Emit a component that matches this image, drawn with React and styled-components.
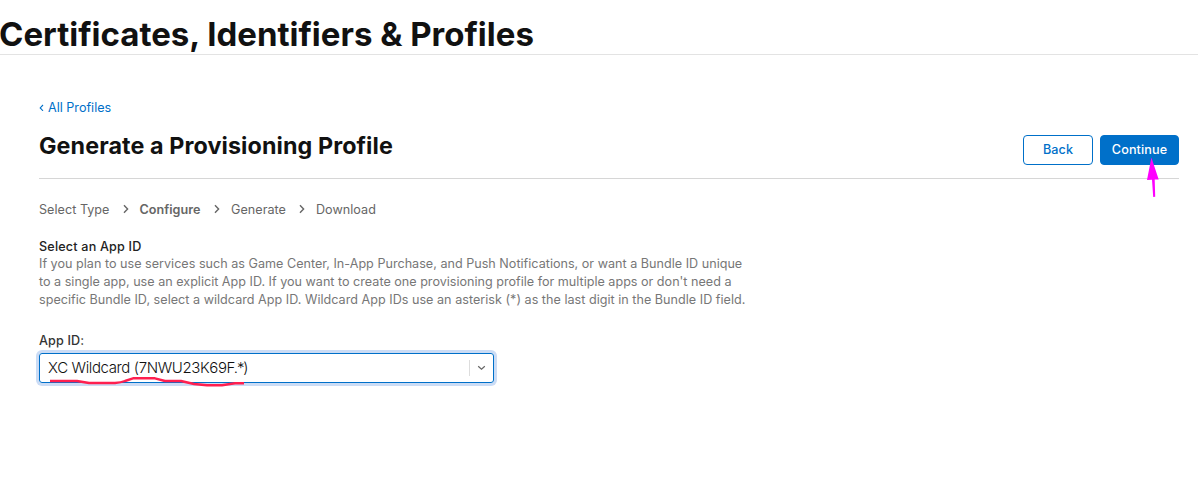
import React from "react";
import styled, { createGlobalStyle } from "styled-components";

const GlobalStyle = createGlobalStyle`
  * { box-sizing: border-box; }
  body {
    margin: 0;
    background: #fff;
    color: #111;
    font-family: Inter, "Liberation Sans", sans-serif;
    font-size: 12.6px;
    overflow: hidden;
  }
  h1, h2, h3, p { margin: 0; }
`;

const Page = styled.div`
  height: 492px;
  overflow: hidden;
`;

const SiteHeader = styled.header`
  height: 55px;
  padding-top: 14px;
  border-bottom: 1px solid #e3e3e3;
`;

const SiteTitle = styled.h1`
  font-size: 33px;
  line-height: 40px;
  font-weight: 700;
  letter-spacing: 0;
  margin-left: -1px;
  white-space: nowrap;
`;

const Main = styled.main`
  padding: 43px 19px 0 39px;
`;

const BackLink = styled.a`
  display: flex;
  align-items: center;
  gap: 4px;
  height: 18px;
  color: #0070c9;
  letter-spacing: 0;
`;

const TitleBar = styled.div`
  display: flex;
  justify-content: space-between;
  height: 63px;
  border-bottom: 1px solid #d6d6d6;
`;

const PageTitle = styled.h2`
  padding-top: 15px;
  font-size: 23.3px;
  line-height: 30px;
  font-weight: 700;
  letter-spacing: 0.1px;
`;

const Actions = styled.div`
  display: flex;
  gap: 7px;
  padding-top: 19px;
`;

const Button = styled.button`
  width: ${(p) => p.$width};
  height: 30px;
  padding: 0 0 1px;
  border: 1px solid #0070c9;
  border-radius: 4px;
  background: ${(p) => (p.$primary ? "#0070c9" : "#fff")};
  color: ${(p) => (p.$primary ? "#fff" : "#0070c9")};
  font: 500 12.6px Inter, sans-serif;
  letter-spacing: 0.12px;
`;

const Steps = styled.nav`
  display: flex;
  align-items: center;
  height: 18px;
  margin-top: 21px;
  color: #666;
`;

const Step = styled.span`
  width: ${(p) => p.$width};
  font-weight: ${(p) => (p.$current ? 600 : 400)};
  letter-spacing: 0.03px;
  white-space: nowrap;
`;

const StepArrow = styled.svg`
  width: 6px;
  height: 10px;
  margin: 0 11px 0 13px;
`;

const SectionTitle = styled.h3`
  margin-top: 20px;
  font-size: 12.6px;
  line-height: 18px;
  font-weight: 530;
  letter-spacing: 0.19px;
  color: #222;
`;

const Line = styled.span`
  display: block;
  letter-spacing: ${(p) => p.$tracking};
  white-space: nowrap;
`;

const Description = styled.p`
  line-height: 18px;
  margin-top: -1px;
  color: #777;
`;

const Label = styled.label`
  display: block;
  margin-top: 23px;
  line-height: 18px;
  font-weight: 530;
  letter-spacing: 0.15px;
  color: #333;
`;

const Select = styled.div`
  position: relative;
  display: flex;
  align-items: center;
  width: 455px;
  height: 30px;
  margin-top: 3px;
  padding-left: 8px;
  border: 1px solid #0070c9;
  border-radius: 3px;
  box-shadow: 0 0 0 3px #cbdcf5;
`;

const Value = styled.span`
  flex: 1;
  padding-bottom: 1px;
  font-size: 15px;
  font-weight: 350;
  letter-spacing: -0.38px;
  color: #111;
`;

const Tight = styled.span`
  letter-spacing: -1.1px;
`;

const Toggle = styled.span`
  display: flex;
  align-items: center;
  justify-content: center;
  width: 24px;
  height: 16px;
  border-left: 1px solid #ddd;
`;

const Underline = styled.svg`
  position: absolute;
  left: 9px;
  top: 20px;
  width: 200px;
  height: 16px;
  pointer-events: none;
`;

const Pointer = styled.svg`
  position: absolute;
  left: 1143px;
  top: 155px;
  width: 20px;
  height: 45px;
  pointer-events: none;
`;

const Arrow = () => (
  <StepArrow viewBox="0 0 6 10" fill="none">
    <path d="M1 1.2 4.6 5 1 8.8" stroke="#666" strokeWidth="1.4" />
  </StepArrow>
);

export default function App() {
  return (
    <Page>
      <GlobalStyle />
      <SiteHeader>
        <SiteTitle>Certificates, Identifiers &amp; Profiles</SiteTitle>
      </SiteHeader>
      <Main>
        <BackLink>
          <svg width="5" height="8" viewBox="0 0 5 8" fill="none">
            <path d="M4 2 1.2 4.9 4 7.8" stroke="#0070c9" strokeWidth="1.1" />
          </svg>
          All Profiles
        </BackLink>
        <TitleBar>
          <PageTitle>Generate a Provisioning Profile</PageTitle>
          <Actions>
            <Button $width="70px">Back</Button>
            <Button $width="79px" $primary>Continue</Button>
          </Actions>
        </TitleBar>
        <Steps>
          <Step $width="70.5px">Select Type</Step>
          <Arrow />
          <Step $width="61.5px" $current>Configure</Step>
          <Arrow />
          <Step $width="55px">Generate</Step>
          <Arrow />
          <Step $width="61px">Download</Step>
        </Steps>
        <SectionTitle>Select an App ID</SectionTitle>
        <Description>
          <Line $tracking="0.01px">If you plan to use services such as Game Center, In-App Purchase, and Push Notifications, or want a Bundle ID unique</Line>
          <Line $tracking="0px">to a single app, use an explicit App ID. If you want to create one provisioning profile for multiple apps or don't need a</Line>
          <Line $tracking="0.018px">specific Bundle ID, select a wildcard App ID. Wildcard App IDs use an asterisk (*) as the last digit in the Bundle ID field.</Line>
        </Description>
        <Label>App ID:</Label>
        <Select>
          <Value>XC Wildcard (7NWU23K69<Tight>F.*</Tight>)</Value>
          <Toggle>
            <svg width="9" height="6" viewBox="0 0 9 6" fill="none">
              <path d="M1.2 1.2 4.5 4.3 7.8 1.2" stroke="#666" strokeWidth="1.2" />
            </svg>
          </Toggle>
          <Underline viewBox="0 0 200 16" fill="none">
            <path d="M1 7H28L40 9H66Q72 8.5 76 7L84 4.3H106L116 7H132L145 10L158 11.3H173L186 9.3H195" stroke="#ff1f4f" strokeWidth="2.4" strokeLinejoin="round" />
          </Underline>
        </Select>
      </Main>
      <Pointer viewBox="0 0 20 45">
        <path d="M8.4 2.5 15.7 24.5 11.7 24.6 12.2 41.8 10.2 42 9 24.8 4 25Z" fill="#ff00ff" />
      </Pointer>
    </Page>
  );
}
